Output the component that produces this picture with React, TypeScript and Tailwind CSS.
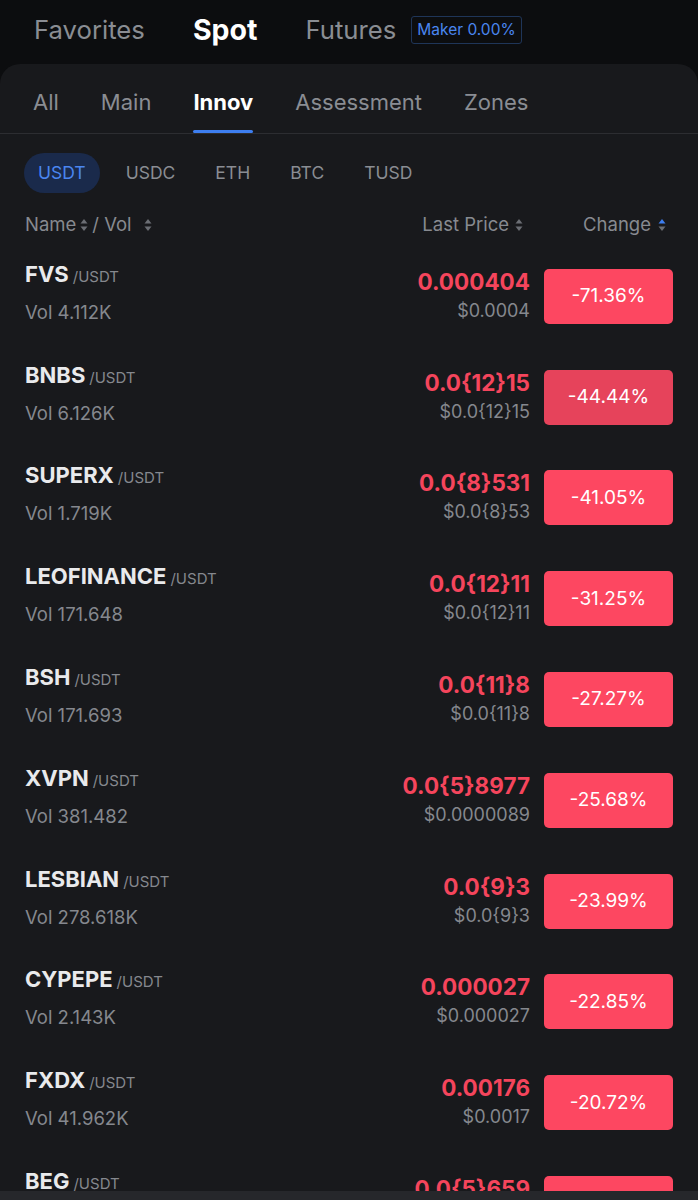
import type { ReactNode } from 'react';

type Pair = {
  name: string;
  vol: string;
  price: string;
  usd: string;
  change: string;
  dim?: boolean;
};

const pairs: Pair[] = [
  { name: 'FVS', vol: 'Vol 4.112K', price: '0.000404', usd: '$0.0004', change: '-71.36%' },
  { name: 'BNBS', vol: 'Vol 6.126K', price: '0.0{12}15', usd: '$0.0{12}15', change: '-44.44%', dim: true },
  { name: 'SUPERX', vol: 'Vol 1.719K', price: '0.0{8}531', usd: '$0.0{8}53', change: '-41.05%' },
  { name: 'LEOFINANCE', vol: 'Vol 171.648', price: '0.0{12}11', usd: '$0.0{12}11', change: '-31.25%' },
  { name: 'BSH', vol: 'Vol 171.693', price: '0.0{11}8', usd: '$0.0{11}8', change: '-27.27%' },
  { name: 'XVPN', vol: 'Vol 381.482', price: '0.0{5}8977', usd: '$0.0000089', change: '-25.68%' },
  { name: 'LESBIAN', vol: 'Vol 278.618K', price: '0.0{9}3', usd: '$0.0{9}3', change: '-23.99%' },
  { name: 'CYPEPE', vol: 'Vol 2.143K', price: '0.000027', usd: '$0.000027', change: '-22.85%' },
  { name: 'FXDX', vol: 'Vol 41.962K', price: '0.00176', usd: '$0.0017', change: '-20.72%' },
  { name: 'BEG', vol: 'Vol 12.401K', price: '0.0{5}659', usd: '$0.0000065', change: '-19.87%' },
];

const tabs = ['All', 'Main', 'Innov', 'Assessment', 'Zones'];
const quotes = ['USDT', 'USDC', 'ETH', 'BTC', 'TUSD'];

function SortIcon({ active = false }: { active?: boolean }) {
  return (
    <svg width="8" height="14" viewBox="0 0 8 14" className="shrink-0">
      <path d="M4 1 L7.5 5.5 H0.5 Z" fill={active ? '#3d7ef0' : '#6b6e74'} />
      <path d="M4 13 L7.5 8.5 H0.5 Z" fill="#6b6e74" />
    </svg>
  );
}

function HeaderLabel({ children }: { children: ReactNode }) {
  return <span className="text-[18.5px] text-[#878a90]">{children}</span>;
}

function PairRow({ pair }: { pair: Pair }) {
  return (
    <div className="flex h-[100.8px] shrink-0 items-center justify-between pl-[25px] pr-[25px]">
      <div className="mb-[8px] flex flex-col gap-[15px]">
        <div className="flex items-baseline gap-[4px]">
          <span className="text-[22px] font-bold leading-[24px] text-[#e9eaec]">{pair.name}</span>
          <span className="text-[15px] leading-[18px] text-[#85888e]">/USDT</span>
        </div>
        <span className="text-[18.5px] leading-[22px] text-[#85888e]">{pair.vol}</span>
      </div>
      <div className="flex items-center gap-[14px]">
        <div className="mb-[2px] flex flex-col items-end gap-[5px]">
          <span className="text-[22.5px] font-bold leading-[26px] text-[#f5455c]">{pair.price}</span>
          <span className="text-[18px] leading-[22px] text-[#85888e]">{pair.usd}</span>
        </div>
        <div
          className={`flex h-[55px] w-[129px] items-center justify-center rounded-[5px] text-[19px] text-white ${
            pair.dim ? 'bg-[#e6435b]' : 'bg-[#fd4761]'
          }`}
        >
          {pair.change}
        </div>
      </div>
    </div>
  );
}

export default function App() {
  return (
    <div
      className="flex h-[1200px] w-[698px] flex-col overflow-hidden bg-[#0c0d0f]"
      style={{ fontFamily: 'Inter, Roboto, "Noto Sans", sans-serif' }}
    >
      {/* top market switch */}
      <div className="flex h-[64px] shrink-0 items-center pb-[4px] pl-[34px]">
        <span className="text-[25.7px] text-[#8a8d93]">Favorites</span>
        <span className="ml-[48px] text-[28.5px] font-bold text-white">Spot</span>
        <span className="ml-[48px] text-[25.7px] text-[#8a8d93]">Futures</span>
        <span className="ml-[15px] rounded-[3px] border border-[#1f3558] px-[5px] py-[3px] text-[15.5px] leading-[20px] text-[#4a86f0]">
          Maker 0.00%
        </span>
      </div>

      <div className="flex flex-1 flex-col overflow-hidden rounded-t-[20px] bg-[#18191c]">
        {/* category tabs */}
        <div className="flex h-[70px] shrink-0 items-end gap-[42px] border-b border-[#2c2d31] pl-[33px]">
          {tabs.map((t) => {
            const active = t === 'Innov';
            return (
              <div key={t} className="flex flex-col items-stretch">
                <span className={`text-[22px] leading-[26px] ${active ? 'font-bold text-white' : 'text-[#8a8d93]'}`}>{t}</span>
                <div className={`mt-[15px] h-[3px] rounded-full ${active ? 'bg-[#3d7ef0]' : 'bg-transparent'}`} />
              </div>
            );
          })}
        </div>

        {/* quote currency chips */}
        <div className="mt-[19px] flex shrink-0 items-center gap-[12px] pl-[24px]">
          {quotes.map((q) => {
            const active = q === 'USDT';
            return (
              <span
                key={q}
                className={`flex h-[40px] items-center rounded-full px-[14px] text-[17.5px] ${
                  active ? 'bg-[#1a2a4b] text-[#4a86f0]' : 'text-[#8a8d93]'
                }`}
              >
                {q}
              </span>
            );
          })}
        </div>

        {/* column headers */}
        <div className="mt-[15px] flex h-[34px] shrink-0 items-center justify-between pl-[25px] pr-[32px]">
          <div className="flex items-center gap-[4px]">
            <HeaderLabel>Name</HeaderLabel>
            <SortIcon />
            <HeaderLabel>/ Vol</HeaderLabel>
            <span className="ml-[8px]">
              <SortIcon />
            </span>
          </div>
          <div className="flex items-center">
            <div className="flex items-center gap-[6px]">
              <HeaderLabel>Last Price</HeaderLabel>
              <SortIcon />
            </div>
            <div className="ml-[60px] flex items-center gap-[7px]">
              <HeaderLabel>Change</HeaderLabel>
              <SortIcon active />
            </div>
          </div>
        </div>

        {/* pair list */}
        <div className="mt-[4px] flex flex-1 flex-col overflow-hidden">
          {pairs.map((p) => (
            <PairRow key={p.name} pair={p} />
          ))}
        </div>

        <div className="h-[9px] shrink-0 bg-[#26272b]" />
      </div>
    </div>
  );
}
